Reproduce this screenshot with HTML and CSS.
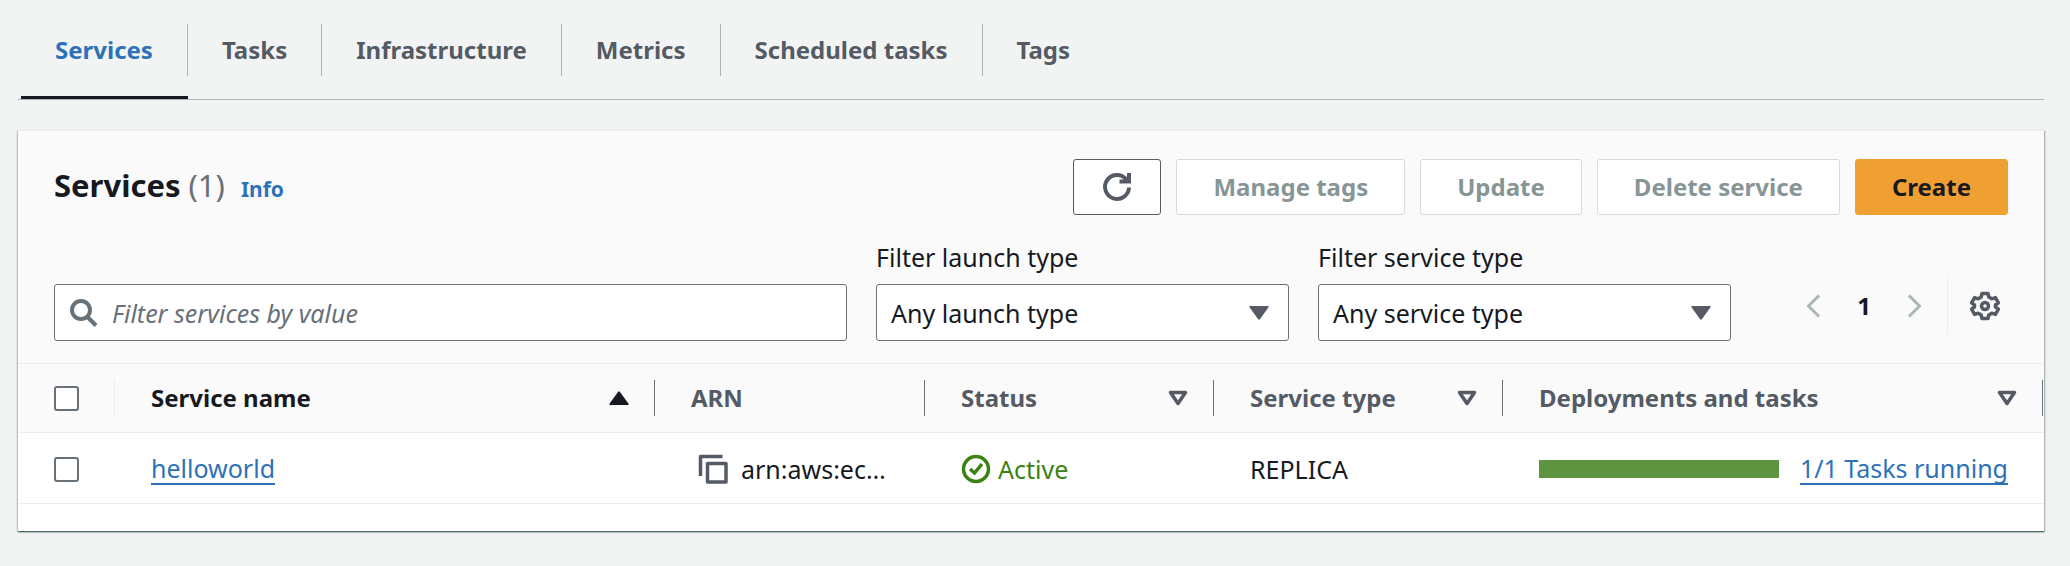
FILE: index.html
```
<!DOCTYPE html>
<html lang="en">
<head>
<meta charset="utf-8">
<title>Services</title>
<link rel="stylesheet" href="styles.css">
</head>
<body>
<nav class="tabs" aria-label="Cluster sections">
  <a class="tab tab-active" href="#services" aria-current="page"><span>Services</span></a>
  <a class="tab" href="#tasks"><span>Tasks</span></a>
  <a class="tab" href="#infrastructure"><span>Infrastructure</span></a>
  <a class="tab" href="#metrics"><span>Metrics</span></a>
  <a class="tab" href="#scheduled"><span>Scheduled tasks</span></a>
  <a class="tab" href="#tags"><span>Tags</span></a>
</nav>

<main class="panel">
  <header class="panel-header">
    <div class="heading">
      <h2 class="title">Services <span class="count">(1)</span></h2>
      <a class="info" href="#info">Info</a>
    </div>
    <div class="actions">
      <button class="button button-icon" type="button" aria-label="Refresh">
        <svg class="icon" viewBox="0 0 32 32" fill="none" stroke="currentColor" stroke-width="4"><path d="M28 16.500A12 12 0 1 1 25 8l3 3M28 2v8.500H18.500"/></svg>
      </button>
      <button class="button" type="button" disabled>Manage tags</button>
      <button class="button" type="button" disabled>Update</button>
      <button class="button" type="button" disabled>Delete service</button>
      <button class="button button-primary" type="button">Create</button>
    </div>
  </header>

  <div class="toolbar">
    <div class="search">
      <svg class="icon search-icon" viewBox="0 0 32 32" fill="none" stroke="currentColor" stroke-width="4"><circle cx="13" cy="13" r="9"/><path d="M19.500 20L28 28.500"/></svg>
      <input class="search-input" type="search" placeholder="Filter services by value" aria-label="Filter services by value">
    </div>
    <div class="field">
      <label class="label" for="launch">Filter launch type</label>
      <div class="select-box">
        <select class="select" id="launch"><option>Any launch type</option></select>
        <svg class="caret" viewBox="0 0 20 16"><path d="M2 1h16a1 1 0 0 1 1 2l-8 11q-1 1.500-2 0L1 3a1 1 0 0 1 1-2z" fill="currentColor"/></svg>
      </div>
    </div>
    <div class="field">
      <label class="label" for="service">Filter service type</label>
      <div class="select-box">
        <select class="select" id="service"><option>Any service type</option></select>
        <svg class="caret" viewBox="0 0 20 16"><path d="M2 1h16a1 1 0 0 1 1 2l-8 11q-1 1.500-2 0L1 3a1 1 0 0 1 1-2z" fill="currentColor"/></svg>
      </div>
    </div>
    <div class="paging">
      <button class="page-arrow" type="button" disabled aria-label="Previous page"><svg class="chevron" viewBox="0 0 16 24" fill="none" stroke="currentColor" stroke-width="3"><path d="M14 1.500L3.500 12 14 22.500"/></svg></button>
      <button class="page-number" type="button" aria-current="page">1</button>
      <button class="page-arrow" type="button" disabled aria-label="Next page"><svg class="chevron" viewBox="0 0 16 24" fill="none" stroke="currentColor" stroke-width="3"><path d="M2 1.500L12.500 12 2 22.500"/></svg></button>
      <div class="settings">
        <button class="gear" type="button" aria-label="Preferences"><svg class="icon" viewBox="0 0 32 32" fill="none" stroke="currentColor" stroke-width="3.500" stroke-linejoin="round"><path d="M13 3.500h6l.8 3.500 3 1.800 3.600-1.200 3 5.200-2.900 2.200v2l2.900 2.200-3 5.200-3.600-1.200-3 1.800-.8 3.500h-6l-.8-3.500-3-1.800-3.600 1.200-3-5.200 2.900-2.200v-2l-2.900-2.200 3-5.200 3.600 1.200 3-1.800z"/><circle cx="16" cy="16" r="3.500"/></svg></button>
      </div>
    </div>
  </div>

  <table class="table">
    <colgroup><col class="col-check"><col class="col-name"><col class="col-arn"><col class="col-status"><col class="col-type"><col></colgroup>
    <thead>
      <tr>
        <th scope="col"><div class="head head-check"><input class="check" type="checkbox" aria-label="Select all services"></div></th>
        <th scope="col" aria-sort="ascending"><div class="head head-sorted">Service name<svg class="sort" viewBox="0 0 20 16"><path d="M2 15h16a1 1 0 0 0 1-2L11 2q-1-1.500-2 0L1 13a1 1 0 0 0 1 2z" fill="currentColor"/></svg></div></th>
        <th scope="col"><div class="head">ARN</div></th>
        <th scope="col"><div class="head">Status<svg class="sort" viewBox="0 0 20 16" fill="none" stroke="currentColor" stroke-width="3.500" stroke-linejoin="round"><path d="M2.500 2.500h15L10 13.500z"/></svg></div></th>
        <th scope="col"><div class="head">Service type<svg class="sort" viewBox="0 0 20 16" fill="none" stroke="currentColor" stroke-width="3.500" stroke-linejoin="round"><path d="M2.500 2.500h15L10 13.500z"/></svg></div></th>
        <th scope="col"><div class="head">Deployments and tasks<svg class="sort" viewBox="0 0 20 16" fill="none" stroke="currentColor" stroke-width="3.500" stroke-linejoin="round"><path d="M2.500 2.500h15L10 13.500z"/></svg></div></th>
      </tr>
    </thead>
    <tbody>
      <tr>
        <td><div class="cell"><input class="check" type="checkbox" aria-label="Select helloworld"></div></td>
        <td><div class="cell"><a class="link" href="#helloworld">helloworld</a></div></td>
        <td><div class="cell cell-arn">
          <button class="copy" type="button" aria-label="Copy ARN"><svg class="icon" viewBox="0 0 32 32" fill="none" stroke="currentColor" stroke-width="3.500"><path d="M3.500 23V3.500H25.500M10.500 10.500h18.500v18.500h-18.500z" stroke-linejoin="round"/></svg></button>
          <span class="arn">arn:aws:ec…</span>
        </div></td>
        <td><div class="cell status"><svg class="icon" viewBox="0 0 32 32" fill="none" stroke="currentColor" stroke-width="3.500"><circle cx="15" cy="16" r="12.500"/><path d="M9 16l4.500 4 7.500-9"/></svg>Active</div></td>
        <td><div class="cell">REPLICA</div></td>
        <td><div class="cell deployments"><div class="bar"></div><a class="link" href="#running">1/1 Tasks running</a></div></td>
      </tr>
    </tbody>
  </table>
</main>
</body>
</html>
```

FILE: styles.css
```
* {
  box-sizing: border-box;
}

body {
  margin: 0;
  padding: 0 26px 32px 18px;
  background: #f2f4f4;
  color: #16191f;
  font-family: "Noto Sans", "Open Sans", sans-serif;
  font-size: 25px;
  line-height: 36px;
}

button,
input,
select {
  font: inherit;
  color: inherit;
}

svg {
  display: block;
  flex: none;
}

.icon {
  width: 32px;
  height: 32px;
}

.tabs {
  display: flex;
  padding: 24px 0 0 3px;
  border-bottom: 1px solid #aab7b8;
}

.tab {
  height: 75px;
  color: #545b64;
  font-size: 24px;
  font-weight: 700;
  text-decoration: none;
}

.tab span {
  display: block;
  padding: 8px 34px;
  border-right: 1px solid #aab7b8;
}

.tab:last-child span {
  border-right: 0;
}

.tab-active {
  color: #2d72b8;
  border-bottom: 3px solid #16191f;
}

.panel {
  margin-top: 30px;
  padding-bottom: 27px;
  background: #fff;
  border-top: 1px solid #eaeded;
  box-shadow: 0 1px 1px 0 rgba(0, 28, 36, 0.5), 1px 1px 2px 0 rgba(0, 28, 36, 0.3), -1px 1px 2px 0 rgba(0, 28, 36, 0.2);
}

.panel-header {
  display: flex;
  align-items: center;
  justify-content: space-between;
  padding: 28px 36px 0;
  background: #fafafa;
}

.heading {
  display: flex;
  align-items: baseline;
  gap: 16px;
}

.title {
  margin: 0;
  font-size: 31px;
  font-weight: 700;
}

.count {
  color: #687078;
  font-weight: 400;
}

.info {
  color: #2d72b8;
  font-size: 21px;
  font-weight: 700;
  text-decoration: none;
}

.actions {
  display: flex;
  gap: 15px;
}

.button {
  height: 56px;
  padding: 0 36px;
  background: #fff;
  border: 1px solid #545b64;
  border-radius: 3px;
  font-size: 24px;
  font-weight: 700;
}

.button:disabled {
  border-color: #d5dbdb;
  color: #879596;
}

.button-icon {
  padding: 0 27px;
  color: #545b64;
}

.button-primary {
  background: #f09f33;
  border-color: #f09f33;
}

.toolbar {
  display: flex;
  align-items: flex-end;
  gap: 29px;
  padding: 24px 36px 22px;
  background: #fafafa;
}

.search {
  display: flex;
  align-items: center;
  flex: 1;
  gap: 12px;
  height: 57px;
  padding: 0 12px 0 13px;
  background: #fff;
  border: 1px solid #687078;
  border-radius: 3px;
}

.search-icon {
  color: #687078;
}

.search-input {
  flex: 1;
  min-width: 0;
  padding: 0;
  border: 0;
  outline: 0;
  background: none;
  appearance: none;
}

.search-input::placeholder {
  color: #687078;
  font-style: italic;
}

.field {
  display: flex;
  flex-direction: column;
  gap: 9px;
  width: 413px;
}

.select-box {
  display: grid;
  align-items: center;
}

.select {
  grid-area: 1 / 1;
  width: 100%;
  height: 57px;
  padding: 0 48px 0 14px;
  background: #fff;
  border: 1px solid #687078;
  border-radius: 3px;
  appearance: none;
}

.caret {
  grid-area: 1 / 1;
  justify-self: end;
  width: 20px;
  height: 16px;
  margin-right: 20px;
  color: #545b64;
  pointer-events: none;
}

.paging {
  display: flex;
  align-items: center;
  align-self: flex-end;
  height: 56px;
  margin-bottom: 7px;
  padding-left: 45px;
}

.page-arrow,
.page-number,
.gear,
.copy {
  padding: 0;
  border: 0;
  background: none;
}

.page-arrow {
  color: #aab7b8;
}

.page-number {
  width: 86px;
  font-size: 24px;
  font-weight: 700;
}

.chevron {
  width: 16px;
  height: 24px;
}

.settings {
  display: flex;
  align-items: center;
  height: 56px;
  margin-left: 24px;
  padding: 0 7px 0 21px;
  border-left: 1px solid #eaeded;
  color: #545b64;
}

.table {
  width: 100%;
  border-collapse: separate;
  border-spacing: 0;
  table-layout: fixed;
}

.col-check {
  width: 97px;
}

.col-name {
  width: 540px;
}

.col-arn {
  width: 270px;
}

.col-status,
.col-type {
  width: 289px;
}

th,
td {
  padding: 0;
  text-align: left;
  border-bottom: 1px solid #eaeded;
}

th {
  padding: 16px 0;
  background: #fafafa;
  border-top: 1px solid #eaeded;
}

th:last-child {
  padding-right: 1px;
}

.head {
  display: flex;
  align-items: center;
  justify-content: space-between;
  height: 36px;
  padding: 0 25px 0 36px;
  border-right: 1px solid #687078;
  color: #545b64;
  font-size: 24px;
  white-space: nowrap;
}

.head-check {
  border-color: #eaeded;
}

.head-sorted {
  color: #16191f;
}

.sort {
  width: 20px;
  height: 16px;
}

.check {
  width: 25px;
  height: 25px;
  margin: 0;
  background: #fff;
  border: 2px solid #687078;
  border-radius: 3px;
  appearance: none;
}

.cell {
  display: flex;
  align-items: center;
  height: 70px;
  padding: 2px 36px 0;
  white-space: nowrap;
}

.link {
  color: #2d72b8;
  line-height: 30px;
  text-decoration: none;
  border-bottom: 2px solid #2d72b8;
}

.cell-arn {
  gap: 12px;
  padding-left: 42px;
}

.copy {
  color: #545b64;
}

.status {
  gap: 5px;
  color: #3c8112;
}

.deployments {
  gap: 21px;
}

.bar {
  flex: 1;
  height: 18px;
  background: #5e9440;
}
```
